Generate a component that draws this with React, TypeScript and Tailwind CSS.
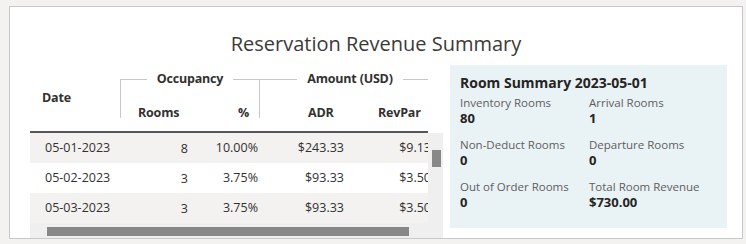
import React from "react";

const rows = [
  { date: "05-01-2023", rooms: "8", pct: "10.00%", adr: "$243.33", revpar: "$9.13", bg: "bg-[#f3f2f1]" },
  { date: "05-02-2023", rooms: "3", pct: "3.75%", adr: "$93.33", revpar: "$3.50", bg: "bg-white" },
  { date: "05-03-2023", rooms: "3", pct: "3.75%", adr: "$93.33", revpar: "$3.50", bg: "bg-[#f3f2f1]" },
];

const summary = [
  { label: "Inventory Rooms", value: "80" },
  { label: "Arrival Rooms", value: "1" },
  { label: "Non-Deduct Rooms", value: "0" },
  { label: "Departure Rooms", value: "0" },
  { label: "Out of Order Rooms", value: "0" },
  { label: "Total Room Revenue", value: "$730.00" },
];

function GroupHeader({ label, width }: { label: string; width: string }) {
  return (
    <div className={`flex h-[26px] items-center ${width}`}>
      <div className="h-px flex-1 bg-[#c8c8c8]" />
      <div className="px-[10px] text-[12.5px] font-bold leading-[18px] text-[#323130] whitespace-nowrap tracking-[-0.2px]">
        {label}
      </div>
      <div className="h-px flex-1 bg-[#c8c8c8]" />
    </div>
  );
}

export default function App() {
  return (
    <div
      className="w-[746px] h-[244px] bg-[#f3f2f1] pt-[6px] pl-[9px] overflow-hidden"
      style={{ fontFamily: '"Open Sans", "Noto Sans", sans-serif' }}
    >
      <div className="w-[734px] h-[233px] bg-white border border-[#c8c8c8] overflow-hidden flex flex-col">
        <div className="pt-[23px] h-[51px] text-center text-[20px] leading-[28px] text-[#3b3a39]">
          Reservation Revenue Summary
        </div>
        <div className="flex flex-1 pl-[20px]">
          {/* Table block */}
          <div className="w-[413px] flex flex-col mt-[8px]">
            {/* Header */}
            <div className="w-[398px] overflow-hidden">
              <div className="flex h-[65px] w-[600px]">
                <div className="w-[90px] flex items-center pl-[12px] text-[12.5px] font-bold tracking-[-0.2px] text-[#323130]">
                  Date
                </div>
                {/* Occupancy group */}
                <div className="flex">
                  <div className="w-px self-start mt-[13px] h-[39px] bg-[#c8c8c8]" />
                  <div className="flex flex-col w-[138px]">
                    <GroupHeader label="Occupancy" width="w-[138px]" />
                    <div className="flex pt-[12px] text-[12.5px] font-bold tracking-[-0.2px] leading-[18px] text-[#323130]">
                      <div className="w-[75px] pl-[17px]">Rooms</div>
                      <div className="w-[63px] text-right pr-[10px]">%</div>
                    </div>
                  </div>
                </div>
                {/* Amount group */}
                <div className="flex">
                  <div className="w-px self-start mt-[13px] h-[39px] bg-[#c8c8c8]" />
                  <div className="flex flex-col w-[180px]">
                    <GroupHeader label="Amount (USD)" width="w-[180px]" />
                    <div className="flex pt-[12px] text-[12.5px] font-bold tracking-[-0.2px] leading-[18px] text-[#323130]">
                      <div className="w-[90px] pl-[48px]">ADR</div>
                      <div className="w-[90px] pl-[28px]">RevPar</div>
                    </div>
                  </div>
                </div>
              </div>
              <div className="h-[2px] bg-[#575757]" />
            </div>
            {/* Body */}
            <div className="flex">
              <div className="w-[398px] overflow-hidden">
                <div className="w-[600px]">
                  {rows.map((r) => (
                    <div key={r.date} className={`flex h-[30px] items-center text-[12.5px] text-[#323130] ${r.bg}`}>
                      <div className="w-[90px] pl-[15px]">{r.date}</div>
                      <div className="w-[76px] text-right pr-[8px] pt-[3px]">{r.rooms}</div>
                      <div className="w-[63px] text-right pr-[1px]">{r.pct}</div>
                      <div className="w-[91px] text-right pr-[6px]">{r.adr}</div>
                      <div className="w-[90px] text-right pr-[9px]">{r.revpar}</div>
                    </div>
                  ))}
                </div>
              </div>
              <div className="w-[15px] bg-[#efefef] pt-[17px] pl-[4px]">
                <div className="w-[9px] h-[17px] bg-[#888888]" />
              </div>
            </div>
            <div className="h-[15px] bg-[#efefef] pt-[4px] pl-[17px]">
              <div className="w-[362px] h-[9px] bg-[#888888]" />
            </div>
          </div>
          {/* Summary panel */}
          <div className="ml-[7px] mt-[7px] w-[277px] h-[163px] bg-[#e9f2f5] pt-[8px] pl-[10px]">
            <div className="text-[14px] font-bold leading-[20px] text-[#252423]">Room Summary 2023-05-01</div>
            <div className="grid grid-cols-[129px_1fr] gap-y-[10px] mt-[2px]">
              {summary.map((s) => (
                <div key={s.label}>
                  <div className="text-[11.5px] leading-[15px] text-[#605e5c]">{s.label}</div>
                  <div className="text-[13px] font-bold leading-[17px] text-[#252423]">{s.value}</div>
                </div>
              ))}
            </div>
          </div>
        </div>
      </div>
    </div>
  );
}
